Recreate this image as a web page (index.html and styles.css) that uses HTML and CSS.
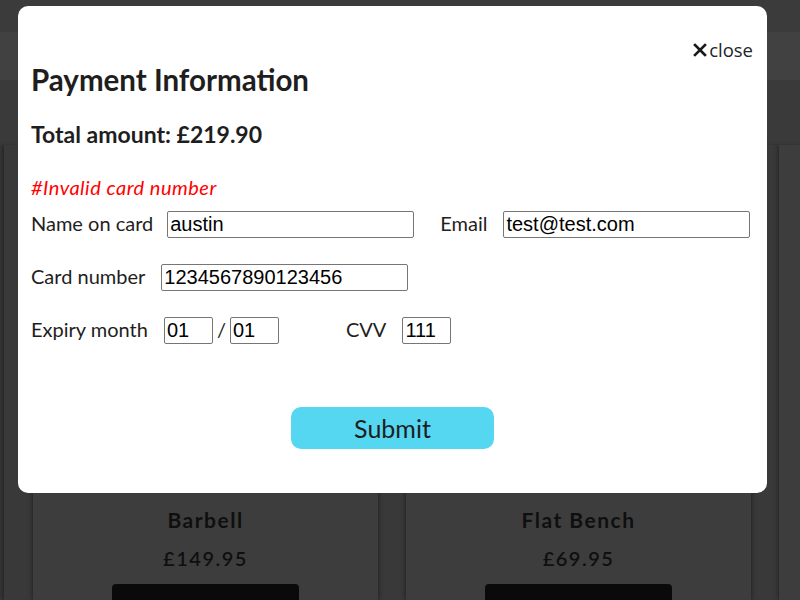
FILE: index.html
```html
<!DOCTYPE html>
<html lang="en">
<head>
<meta charset="utf-8">
<title>Payment</title>
<link rel="stylesheet" href="styles.css">
</head>
<body>
<header class="topbar"></header>
<div class="subbar"></div>
<main class="products">
  <div class="card">
    <div class="card-img"></div>
    <h3 class="card-title">Barbell</h3>
    <p class="card-price">£149.95</p>
    <button class="card-btn">In Cart</button>
  </div>
  <div class="card">
    <div class="card-img"></div>
    <h3 class="card-title">Flat Bench</h3>
    <p class="card-price">£69.95</p>
    <button class="card-btn">In Cart</button>
  </div>
  <div class="card"></div>
</main>

<div class="modal">
  <div class="close-row">
    <a class="close" href="#">
      <svg class="close-x" width="14" height="14" viewBox="0 0 14 14" aria-hidden="true"><path d="M2 2 L12 12 M12 2 L2 12" stroke="#1a1a1a" stroke-width="2.6" stroke-linecap="square"/></svg>close
    </a>
  </div>
  <h2 class="title">Payment Information</h2>
  <p class="total">Total amount: £219.90</p>
  <p class="error">#Invalid card number</p>
  <form class="form">
    <div class="row">
      <label class="lbl lbl-name">Name on card</label>
      <input class="field wide" type="text" value="austin">
      <label class="lbl lbl-email">Email</label>
      <input class="field wide" type="text" value="test@test.com">
    </div>
    <div class="row">
      <label class="lbl">Card number</label>
      <input class="field wide" type="text" value="1234567890123456">
    </div>
    <div class="row">
      <label class="lbl">Expiry month</label>
      <input class="field small" type="text" value="01">
      <span class="slash">/</span>
      <input class="field small" type="text" value="01">
      <label class="lbl lbl-cvv">CVV</label>
      <input class="field small" type="text" value="111">
    </div>
    <div class="actions">
      <button class="submit" type="button">Submit</button>
    </div>
  </form>
</div>
</body>
</html>
```
FILE: styles.css
```css
* { box-sizing: border-box; }
html, body { margin: 0; padding: 0; }
body {
  width: 800px;
  height: 600px;
  overflow: hidden;
  background: #3a3a3a;
  font-family: Lato, "Open Sans", sans-serif;
  color: #212529;
}
.topbar { height: 32px; background: #3b3b3b; }
.subbar { height: 48px; background: #414141; }
.products {
  margin: 65px 0 0 4px;
  padding-left: 29px;
  display: flex;
  gap: 28px;
  background: #393939;
  box-shadow: -3px 0 3px #2a2a2a;
  height: 455px;
  overflow: hidden;
}
.card {
  flex: 0 0 345px;
  height: 455px;
  background: #3d3d3d;
  box-shadow: 0 0 5px rgba(0,0,0,0.55);
  text-align: center;
}
.card-img { height: 362px; }
.card-title {
  margin: 0;
  font-size: 21px;
  font-weight: 700;
  letter-spacing: 1.5px;
  line-height: 26px;
  color: #0f0f0f;
}
.card-price {
  margin: 13px 0 0;
  font-size: 20px;
  font-weight: 600;
  letter-spacing: 1.5px;
  line-height: 24px;
  color: #0f0f0f;
}
.card-btn {
  margin-top: 14px;
  width: 187px;
  height: 44px;
  border: 0;
  border-radius: 4px;
  background: #0a0a0a;
  color: #3a3a3a;
  font-family: Lato, sans-serif;
  font-size: 20px;
  line-height: 24px;
  padding: 7px 0 0;
  vertical-align: top;
  letter-spacing: 1px;
}

.modal {
  position: fixed;
  top: 6px;
  left: 18px;
  width: 749px;
  height: 487px;
  background: #fff;
  border-radius: 10px;
  padding: 32px 13px 0;
}
.close-row {
  display: flex;
  justify-content: flex-end;
  height: 24px;
}
.close {
  display: flex;
  align-items: center;
  margin-right: 1px;
  font-family: "Open Sans", sans-serif;
  font-size: 18.5px;
  line-height: 24px;
  color: #212529;
  text-decoration: none;
}
.close-x { margin-right: 2px; }
.title {
  margin: 0;
  font-size: 29.5px;
  font-weight: 700;
  line-height: 36px;
  color: #1e1e1e;
}
.total {
  margin: 22px 0 0;
  font-size: 23px;
  font-weight: 700;
  line-height: 29px;
  color: #1e1e1e;
}
.error {
  margin: 27px 0 0;
  font-size: 20px;
  font-style: italic;
  letter-spacing: 0.5px;
  line-height: 22px;
  color: #ff0000;
}
.form { margin-top: 13px; }
.row {
  display: flex;
  align-items: center;
  height: 27px;
  margin-bottom: 26px;
}
.lbl {
  font-size: 20px;
  color: #1e1e1e;
  margin-right: 16px;
  margin-bottom: 3px;
}
.lbl-name { margin-right: 14px; }
.lbl-email { margin-left: 26px; }
.lbl-cvv { margin-left: 67px; }
.field {
  height: 27px;
  padding: 1px 2px;
  border: 1px solid #767676;
  border-radius: 2px;
  font-family: "Liberation Sans", Arial, sans-serif;
  font-size: 20px;
  color: #000;
  background: #fff;
}
.wide { width: 247px; }
.small { width: 49px; }
.slash {
  margin: 0 4px 3px 4px;
  font-size: 20px;
  color: #1e1e1e;
}
.actions {
  display: flex;
  justify-content: center;
  margin-top: 63px;
}
.submit {
  width: 203px;
  height: 42px;
  border: 0;
  border-radius: 10px;
  background: #55d6f1;
  color: #1e1e1e;
  font-family: Lato, sans-serif;
  font-size: 25px;
}
```
